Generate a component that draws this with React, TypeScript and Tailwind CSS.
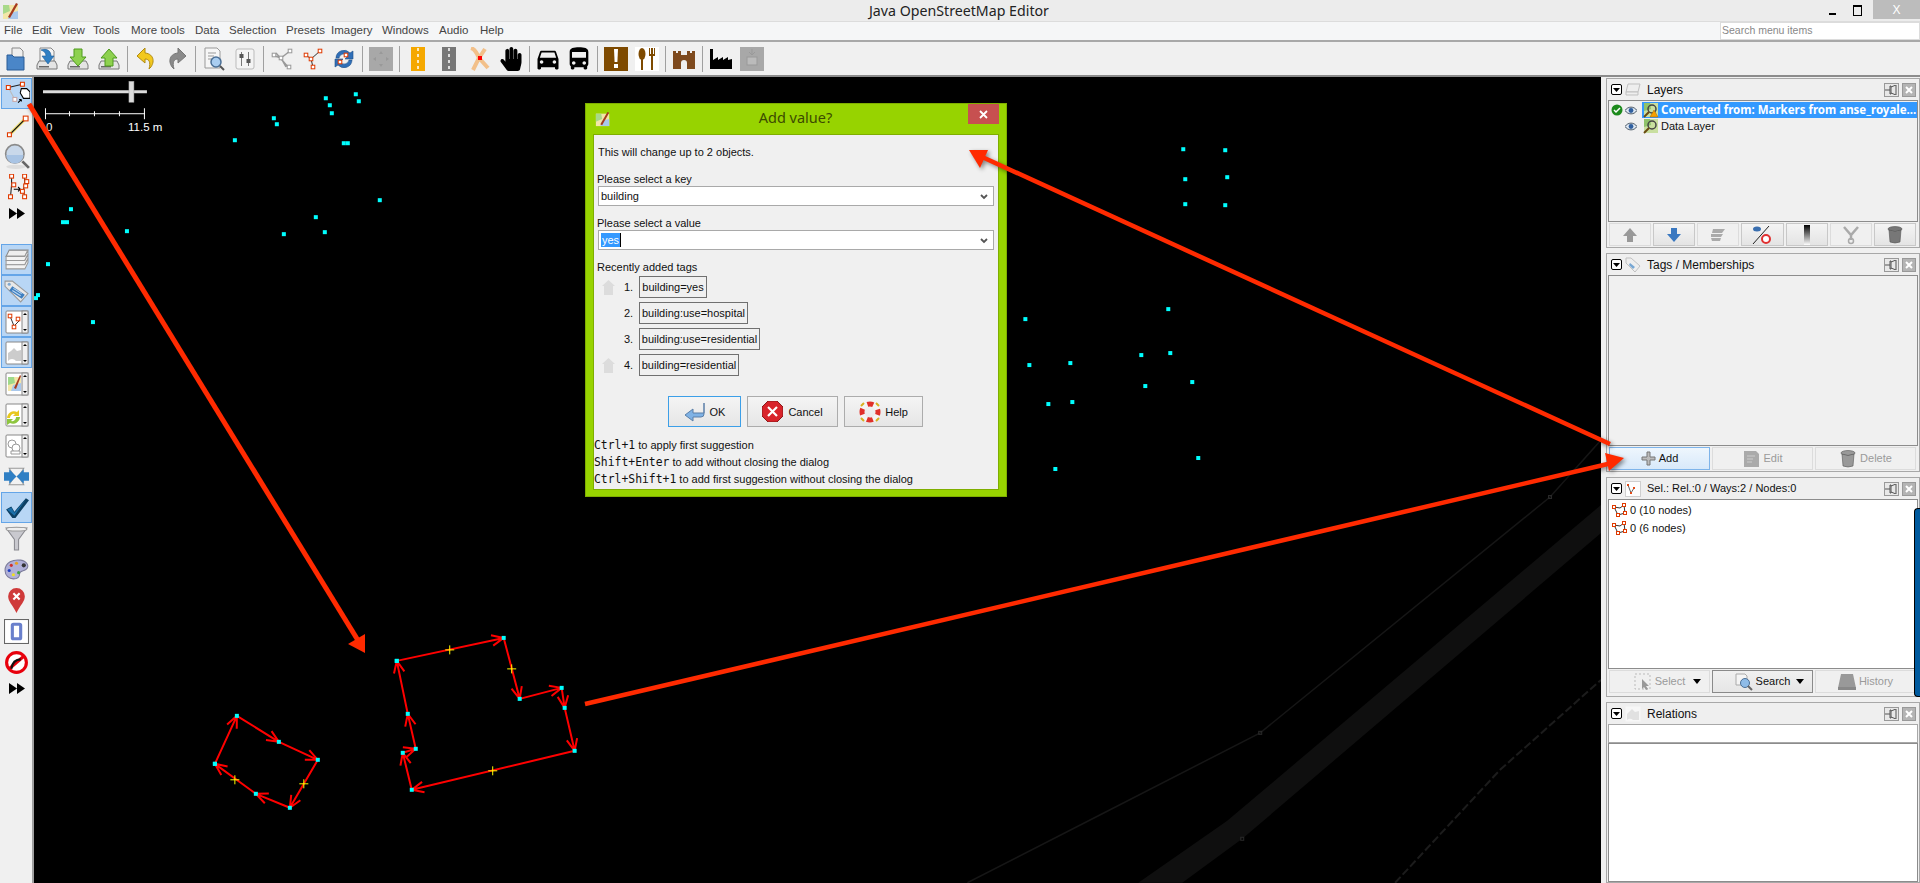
import type { ReactNode } from 'react';
import { FaHandPaper } from 'react-icons/fa';
import { MdDirectionsBus, MdDirectionsCar } from 'react-icons/md';

type Pt = [number, number];

const Ico = ({ children, s = 24 }: { children: ReactNode; s?: number }) => (
	<svg width={s} height={s} viewBox="0 0 24 24" className="shrink-0">
		{children}
	</svg>
);

const Nd = ({ x, y, c = '#e03a00', r = 1.8 }: { x: number; y: number; c?: string; r?: number }) => (
	<rect x={x - r} y={y - r} width={r * 2} height={r * 2} fill="#fff" stroke={c} strokeWidth="1" />
);

const Logo = ({ s = 18 }: { s?: number }) => (
	<svg width={s} height={s} viewBox="0 0 18 18" className="shrink-0">
		<rect x="1" y="3" width="15" height="14" fill="#f3e6a8" />
		<path d="M1 3h6l1 6-7 3z" fill="#a8d98a" />
		<path d="M8 11l8-2v8H6z" fill="#a9c8ec" />
		<path d="M6 15L14 1l2 1-8 14z" fill="#a63a1e" />
	</svg>
);

const drive = (
	<>
		<path d="M4 14h16l2 4v4H2v-4z" fill="#e4e4e4" stroke="#777" />
		<rect x="4" y="19" width="10" height="1.5" fill="#666" />
	</>
);

const topIcons: ReactNode[] = [
	<Ico key="open">
		<path d="M8 1h8l3 3v10H8z" fill="#eee" stroke="#888" />
		<path d="M3 8h5l2 2h10v13H3z" fill="#4a86c8" stroke="#2b5c96" />
	</Ico>,
	<Ico key="loc">
		<path d="M5 1h11l3 3v11H5z" fill="#f4f4f4" stroke="#888" />
		{drive}
		<path d="M6 3c6-2 10 1 10 6h3l-6 8-6-8h4c0-3-2-5-5-6z" fill="#2f7fc4" stroke="#1d5a96" strokeWidth=".6" />
	</Ico>,
	<Ico key="save">
		{drive}
		<path d="M8 2h8v8h4l-8 9-8-9h4z" fill="#8ed14f" stroke="#4f9a1e" />
	</Ico>,
	<Ico key="up">
		{drive}
		<path d="M8 19v-8H4l8-9 8 9h-4v8z" fill="#8ed14f" stroke="#4f9a1e" />
	</Ico>,
	null,
	<Ico key="undo">
		<path d="M11 1L3 9l8 7v-4c4 0 6 3 4 10 6-5 6-15-4-16z" fill="#f2c81e" stroke="#b08a10" />
	</Ico>,
	<Ico key="redo">
		<path d="M13 1l8 8-8 7v-4c-4 0-6 3-4 10-6-5-6-15 4-16z" fill="#8a8a8a" stroke="#777" />
	</Ico>,
	null,
	<Ico key="prev">
		<path d="M3 1h12l3 3v17H3z" fill="#f6f6f6" stroke="#999" />
		<path d="M6 6h8M6 9h6M6 12h4" stroke="#999" />
		<circle cx="14" cy="15" r="5" fill="#a9cdf0" stroke="#4a6f96" strokeWidth="1.5" />
		<path d="M18 19l4 4" stroke="#555" strokeWidth="2" />
	</Ico>,
	<Ico key="pref">
		<rect x="3" y="2" width="18" height="20" rx="2" fill="#f4f4f4" stroke="#bbb" />
		<path d="M8.5 5v14M15.5 5v14" stroke="#777" />
		<rect x="6.5" y="7" width="4" height="4" fill="#555" />
		<rect x="13.5" y="12" width="4" height="4" fill="#555" />
	</Ico>,
	null,
	<Ico key="split">
		<path d="M2 8l9 3 5 9M11 11l9-7M6 6l12 14" stroke="#999" fill="none" strokeWidth="1.5" />
		<Nd x={4} y={8} c="#999" />
		<Nd x={11} y={11} c="#999" />
		<Nd x={19} y={20} c="#999" />
		<Nd x={20} y={4} c="#999" />
	</Ico>,
	<Ico key="comb">
		<path d="M5 8l5 4 9-8M10 12l2 8" stroke="#333" fill="none" />
		<Nd x={5} y={8} />
		<Nd x={10} y={12} />
		<Nd x={19} y={4} />
		<Nd x={12} y={20} />
	</Ico>,
	<Ico key="refresh">
		<path d="M4 11a8 8 0 0 1 14-5l3-2v8h-8l3-3a5 5 0 0 0-9 2z" fill="#2f6fb8" stroke="#1d4d86" strokeWidth=".6" />
		<path d="M20 13a8 8 0 0 1-14 5l-3 2v-8h8l-3 3a5 5 0 0 0 9-2z" fill="#2f6fb8" stroke="#1d4d86" strokeWidth=".6" />
		<Nd x={14} y={8} />
		<Nd x={8} y={15} />
	</Ico>,
	null,
	<Ico key="tile">
		<rect width="24" height="24" fill="#a8a8a8" />
		<path d="M12 4l2 3h-4zM12 20l2-3h-4zM4 12l3-2v4zM20 12l-3-2v4z" fill="#999" />
	</Ico>,
	null,
	<Ico key="road1">
		<rect x="5" width="14" height="24" fill="#f5a800" />
		<path d="M12 1v22" stroke="#fff" strokeWidth="1.5" strokeDasharray="3 3" />
	</Ico>,
	<Ico key="road2">
		<rect x="5" width="14" height="24" fill="#777" />
		<path d="M12 1v22" stroke="#fff" strokeWidth="1.5" strokeDasharray="3 3" />
	</Ico>,
	<Ico key="junction">
		<path d="M3 1c4 1 6 5 8 10L5 23M11 11l6-9M11 11l9 10" stroke="#f2c08a" fill="none" strokeWidth="4" />
		<rect x="10" y="9" width="4" height="4" fill="#f00" />
	</Ico>,
	<FaHandPaper key="hand" size={24} color="#000" />,
	null,
	<MdDirectionsCar key="car" size={28} color="#000" />,
	<MdDirectionsBus key="bus" size={28} color="#000" />,
	null,
	<Ico key="poi">
		<rect width="24" height="24" fill="#7e4a00" />
		<path d="M10 2h4l-.6 13h-2.8z" fill="#fff" />
		<rect x="10" y="17" width="4" height="4" fill="#fff" />
	</Ico>,
	<Ico key="food">
		<rect width="24" height="24" fill="#fff" />
		<ellipse cx="7" cy="7" rx="3.5" ry="6" fill="#7e4a00" />
		<rect x="6" y="10" width="2" height="13" fill="#7e4a00" />
		<path d="M14 1v8h2v14h2V9h2V1h-1v6h-1V1h-2v6h-1V1z" fill="#7e4a00" />
	</Ico>,
	null,
	<Ico key="castle">
		<path d="M1 4h3v2h2V4h3v4h6V4h3v2h2V4h3v18h-8v-6a3 3 0 0 0-6 0v6H1z" fill="#7e4a1e" />
	</Ico>,
	null,
	<Ico key="factory">
		<path d="M1 22V2h3v11l5-3v3l5-3v3l5-3v3l4-1v10z" fill="#000" />
	</Ico>,
	<Ico key="tile2">
		<rect width="24" height="24" fill="#a8a8a8" />
		<rect x="7" y="10" width="10" height="8" fill="#bbb" stroke="#999" />
		<path d="M12 2v6M9 5l3 3 3-3" stroke="#999" fill="none" />
	</Ico>,
];

const mini = (body: ReactNode) => (
	<Ico s={24}>
		<rect x="1" y="1" width="22" height="22" rx="1" fill="#fff" stroke="#888" />
		<rect x="17" y="1" width="6" height="22" fill="#f0f0f0" stroke="#888" />
		<path d="M20 3l2 2h-4zM20 21l2-2h-4z" fill="#000" />
		{body}
	</Ico>
);

const fastFwd = (
	<svg width="16" height="11" viewBox="0 0 16 11">
		<path d="M0 0l8 5.5-8 5.5zM8 0l8 5.5-8 5.5z" fill="#000" />
	</svg>
);

const leftTop: { icon: ReactNode; on?: boolean }[] = [
	{
		on: true,
		icon: (
			<Ico s={26}>
				<path d="M4 6l13-3" stroke="#222" />
				<path d="M4 6l6 11" stroke="#bbb" />
				<Nd x={4} y={6} />
				<Nd x={17} y={3} />
				<Nd x={10} y={17} c="#c8a8a8" />
				<path d="M16 7l5 0 3 3v6h-6l-3-5z" fill="#fff" stroke="#000" />
				<path d="M13 20l3-3m0 0h-2m2 0v2" stroke="#000" />
			</Ico>
		),
	},
	{
		icon: (
			<Ico s={26}>
				<path d="M5 21L20 6" stroke="#f2e27a" strokeWidth="3" />
				<path d="M5 21L20 6" stroke="#111" />
				<Nd x={5} y={21} />
				<Nd x={20} y={6} r={2.2} />
			</Ico>
		),
	},
	{
		icon: (
			<Ico s={26}>
				<ellipse cx="11" cy="22" rx="9" ry="2" fill="#ddd" />
				<circle cx="10" cy="10" r="8.5" fill="#c9d8ea" stroke="#8a8a8a" strokeWidth="1.5" />
				<path d="M2 11h16a8 8 0 0 1-16 0z" fill="#a9c4e4" />
				<path d="M17 17l6 6" stroke="#666" strokeWidth="2.5" />
			</Ico>
		),
	},
	{
		icon: (
			<Ico s={26}>
				<path d="M7 2v8l-1 11M19 2v7l-1 6 1 6" stroke="#222" fill="none" />
				<path d="M9 14h6m-2-2l2 2-2 2" stroke="#000" fill="none" />
				<Nd x={7} y={2} />
				<Nd x={9} y={10} />
				<Nd x={6} y={21} />
				<Nd x={19} y={2} />
				<Nd x={21} y={7} />
				<Nd x={20} y={11} />
				<Nd x={17} y={16} />
				<Nd x={19} y={21} />
			</Ico>
		),
	},
];

const leftBottom: { icon: ReactNode; on?: boolean }[] = [
	{
		on: true,
		icon: (
			<Ico s={25}>
				<path d="M5 3h18l-3 6H2z" fill="#eee" stroke="#888" />
				<path d="M2 9h18l3-6v4l-3 6H2z" fill="#f3f3f3" stroke="#999" />
				<path d="M2 13h18l3-6v4l-3 6H2z" fill="#f3f3f3" stroke="#999" />
				<path d="M2 17h18l3-6v4l-3 6H2z" fill="#f3f3f3" stroke="#999" />
			</Ico>
		),
	},
	{
		on: true,
		icon: (
			<Ico s={25}>
				<path d="M1 3h7l15 12-7 8L1 8z" fill="#e8e8e8" stroke="#999" />
				<circle cx="5" cy="6" r="1.5" fill="#7fa8d0" />
				<path d="M8 8l12 8-3 4-12-8z" fill="#3f7fc0" />
				<path d="M9 10l8 5M8 12l8 5" stroke="#bcd8f2" />
			</Ico>
		),
	},
	{
		on: true,
		icon: mini(
			<>
				<path d="M5 6l4 10 5-5" stroke="#333" fill="none" />
				<Nd x={5} y={6} />
				<Nd x={9} y={17} />
				<Nd x={13} y={9} />
			</>
		),
	},
	{
		on: true,
		icon: mini(<path d="M3 20a5 5 0 0 1 8 0h5V9l-4 1-3-3-3 3-3 2z" fill="#ccc" />),
	},
	{
		icon: mini(
			<>
				<rect x="3" y="5" width="13" height="14" fill="#f3e6a8" />
				<path d="M3 5h6l1 6-7 2z" fill="#9fd98a" />
				<path d="M8 13l8-2v8H6z" fill="#a9c8ec" />
				<path d="M9 16l6-13 1 1-5 13z" fill="#a63a1e" />
			</>
		),
	},
	{
		icon: mini(
			<>
				<path d="M2 15a7 7 0 0 1 10-6l2-2v6H8l2-2a4 4 0 0 0-5 4z" fill="#e8c81e" />
				<path d="M15 14a7 7 0 0 1-10 6l-3 2v-6h6l-2 2a4 4 0 0 0 5-4z" fill="#8ec63f" />
			</>
		),
	},
	{
		icon: mini(
			<>
				<circle cx="7" cy="10" r="4" fill="#fff" stroke="#999" />
				<circle cx="11" cy="14" r="4" fill="#fff" stroke="#999" />
				<path d="M6 17h9v3H6z" fill="#fff" stroke="#999" />
			</>
		),
	},
	{
		icon: (
			<Ico s={25}>
				<path d="M5 4h14l-5 8 5 8H5l5-8z" fill="#f2f2f2" stroke="#999" />
				<path d="M0 8h5V5l7 7-7 7v-3H0z" fill="#2f7fc4" />
				<path d="M24 8h-5V5l-7 7 7 7v-3h5z" fill="#2f7fc4" />
			</Ico>
		),
	},
	{
		on: true,
		icon: (
			<Ico s={25}>
				<path d="M2 14l5-3 3 5L21 3l3 2-13 17H8z" fill="#0d3f63" />
				<path d="M3 14l4-2 3 5L21 4l-11 16z" fill="#1b6ea8" />
			</Ico>
		),
	},
	{
		icon: (
			<Ico s={25}>
				<path d="M2 2h20l-8 11v10h-4V13z" fill="#c9c9cf" stroke="#8a8a90" />
				<ellipse cx="12" cy="3" rx="10" ry="1.8" fill="#eee" stroke="#999" />
			</Ico>
		),
	},
	{
		icon: (
			<Ico s={25}>
				<path d="M1 13C1 5 9 2 16 3c6 1 9 6 5 9-3 2-6 1-6 4s-2 5-6 5-8-3-8-8z" fill="#b0b0d8" stroke="#7a7a9a" />
				<circle cx="7" cy="8" r="1.5" fill="#d03030" />
				<circle cx="12" cy="6" r="1.5" fill="#e8a020" />
				<circle cx="5" cy="13" r="1.5" fill="#2040c0" />
				<circle cx="9" cy="17" r="1.5" fill="#f0e020" />
				<circle cx="19" cy="8" r="2" fill="#333" />
				<circle cx="14" cy="15" r="1.5" fill="#40a040" />
			</Ico>
		),
	},
	{
		icon: (
			<Ico s={25}>
				<path d="M12 24C8 16 4 13 4 8a8 8 0 0 1 16 0c0 5-4 8-8 16z" fill="#cf3a3a" />
				<path d="M9 5l6 6M15 5l-6 6" stroke="#fff" strokeWidth="2" />
			</Ico>
		),
	},
	{
		icon: (
			<Ico s={25}>
				<rect x=".5" y=".5" width="23" height="23" fill="#fff" stroke="#666" />
				<path d="M9 5h6q1 0 1 1v12q0 1-1 1H9q-1 0-1-1V6q0-1 1-1z" fill="none" stroke="#6a80cc" strokeWidth="3" />
			</Ico>
		),
	},
	{
		icon: (
			<Ico s={25}>
				<circle cx="12" cy="12" r="9.5" fill="#fff" stroke="#e8000c" strokeWidth="3" />
				<path d="M5 18L19 6" stroke="#e8000c" strokeWidth="3" />
				<path d="M7 18c1-6 4-9 9-9" stroke="#111" strokeWidth="2" fill="none" />
			</Ico>
		),
	},
];

const Collapse = () => (
	<span className="ml-[3px] flex h-[11px] w-[11px] shrink-0 items-center justify-center rounded-[2px] border border-black bg-white">
		<svg width="7" height="4" viewBox="0 0 7 4">
			<path d="M0 0h7L3.5 4z" fill="#000" />
		</svg>
	</span>
);

const DockBtns = () => (
	<span className="ml-auto mr-[2px] flex gap-[3px]">
		<span className="flex h-[14px] w-[15px] items-center justify-center border border-[#999] bg-[#e8e8e8]">
			<svg width="13" height="10" viewBox="0 0 13 10">
				<path d="M0 5h5M5 1h1v8H5zM11 0v10M6 2l5-2M6 8l5 2" stroke="#555" fill="none" />
			</svg>
		</span>
		<span className="flex h-[14px] w-[14px] items-center justify-center border border-[#999] bg-[#b4b4b4]">
			<svg width="8" height="8" viewBox="0 0 8 8">
				<path d="M1 1l6 6M7 1L1 7" stroke="#fff" strokeWidth="2" />
			</svg>
		</span>
	</span>
);

const PanelHead = ({ icon, title, small }: { icon: ReactNode; title: string; small?: boolean }) => (
	<div className="flex h-[21px] shrink-0 items-center bg-[#efefef]">
		<Collapse />
		<span className="ml-[3px] flex w-[16px] justify-center opacity-90">{icon}</span>
		<span className={`ml-[6px] whitespace-nowrap text-[#111] ${small ? 'text-[11px]' : 'text-[12px]'}`}>{title}</span>
		<DockBtns />
	</div>
);

const PanelBtn = ({
	icon,
	label,
	state = 'off',
	caret,
}: {
	icon: ReactNode;
	label?: string;
	state?: 'off' | 'on' | 'hot' | 'pressed';
	caret?: boolean;
}) => {
	const tone =
		state === 'hot'
			? 'border-[#7eb4ea] bg-gradient-to-b from-[#eef6fd] to-[#d8e9fa] text-[#111]'
			: state === 'on'
				? 'border-[#c8c8c8] bg-gradient-to-b from-[#f4f4f4] to-[#e4e4e4] text-[#111]'
				: state === 'pressed'
					? 'border-[#8a8a8a] bg-gradient-to-b from-[#f0f0f0] to-[#e6e6e6] text-[#111]'
					: 'border-[#dcdcdc] bg-[#f0f0f0] text-[#9a9a9a]';
	return (
		<div className={`relative flex h-[23px] flex-1 items-center justify-center gap-[3px] border text-[11px] ${tone}`}>
			{icon}
			{label && <span>{label}</span>}
			{caret && (
				<svg width="8" height="5" viewBox="0 0 8 5" className="absolute right-[8px] top-[8px]">
					<path d="M0 0h8L4 5z" fill="#000" />
				</svg>
			)}
		</div>
	);
};

const WayIcon = () => (
	<svg width="15" height="14" viewBox="0 0 15 14" className="shrink-0">
		<path d="M2 4l6 1 4-3 1 8-7 2z" fill="none" stroke="#333" />
		<rect x="0.5" y="2.5" width="3" height="3" fill="#fff" stroke="#e03a00" />
		<rect x="10.5" y="0.5" width="3" height="3" fill="#fff" stroke="#e03a00" />
		<rect x="11.5" y="8.5" width="3" height="3" fill="#fff" stroke="#e03a00" />
		<rect x="4.5" y="10.5" width="3" height="3" fill="#fff" stroke="#e03a00" />
	</svg>
);

const HomeIco = () => (
	<svg width="13" height="15" viewBox="0 0 13 15" className="shrink-0">
		<path d="M6.5 0L13 6h-2v9H2V6H0z" fill="#dcdcdc" />
	</svg>
);

const Combo = ({ children }: { children: ReactNode }) => (
	<div className="ml-[4px] flex h-[20px] w-[396px] items-center border border-[#a9a9a9] bg-white pl-[2px] pr-[5px] text-[11px] text-[#111]">
		{children}
		<svg width="8" height="6" viewBox="0 0 8 6" className="ml-auto mt-[2px]">
			<path d="M1 1l3 3 3-3" stroke="#555" strokeWidth="1.8" fill="none" />
		</svg>
	</div>
);

const recent = [
	{ n: '1.', t: 'building=yes', w: 'w-[68px]', home: true },
	{ n: '2.', t: 'building:use=hospital', w: 'w-[109px]', home: false },
	{ n: '3.', t: 'building:use=residential', w: 'w-[121px]', home: false },
	{ n: '4.', t: 'building=residential', w: 'w-[100px]', home: true },
];

const hints = [
	{ k: 'Ctrl+1', t: ' to apply first suggestion' },
	{ k: 'Shift+Enter', t: ' to add without closing the dialog' },
	{ k: 'Ctrl+Shift+1', t: ' to add first suggestion without closing the dialog' },
];

const Dialog = () => (
	<div className="absolute left-[585px] top-[103px] flex h-[394px] w-[422px] flex-col border border-[#7fae00] bg-[#97d300] px-[7px] pb-[6px]">
		<div className="flex h-[30px] shrink-0 items-start">
			<span className="ml-[2px] mt-[7px]">
				<Logo s={16} />
			</span>
			<span className="mt-[3px] flex-1 pl-[12px] text-center font-['Noto_Sans',sans-serif] text-[14.5px] text-[#3c4a00]">Add value?</span>
			<span className="flex h-[20px] w-[31px] items-center justify-center bg-[#c75050]">
				<svg width="9" height="9" viewBox="0 0 9 9">
					<path d="M1 1l7 7M8 1L1 8" stroke="#fff" strokeWidth="1.8" />
				</svg>
			</span>
		</div>
		<div className="flex flex-1 flex-col border border-[#7fae00] bg-[#f0f0f0] text-[11px] leading-[14px] text-[#111]">
			<p className="ml-[4px] mt-[9px] h-[16px] leading-[16px]">This will change up to 2 objects.</p>
			<p className="ml-[3px] mt-[12px] h-[14px]">Please select a key</p>
			<Combo>building</Combo>
			<p className="ml-[3px] mt-[10px] h-[14px]">Please select a value</p>
			<Combo>
				<span className="border-r border-black bg-[#3399ff] px-[1px] text-white">yes</span>
			</Combo>
			<p className="ml-[3px] mt-[10px] h-[14px]">Recently added tags</p>
			<div className="ml-[8px] mt-[2px] flex flex-col gap-[4px]">
				{recent.map((r) => (
					<div key={r.n} className="flex h-[22px] items-center">
						<span className="w-[13px]">{r.home && <HomeIco />}</span>
						<span className="ml-[9px] w-[15px]">{r.n}</span>
						<span className={`flex h-[22px] items-center justify-center whitespace-nowrap border border-[#707070] ${r.w}`}>{r.t}</span>
					</div>
				))}
			</div>
			<div className="mt-[20px] flex h-[31px] justify-center gap-[6px] pr-[1px]">
				<div className="flex w-[73px] items-center justify-center gap-[4px] border border-[#3c9fe8] bg-gradient-to-b from-[#f4f4f4] to-[#e6e6e6]">
					<svg width="22" height="20" viewBox="0 0 22 20">
						<path d="M20 1v10H9V7l-8 6 8 6v-4h8q3 0 3-3z" fill="#7fb2e5" stroke="#5a7fa8" />
					</svg>
					OK
				</div>
				<div className="flex w-[91px] items-center justify-center gap-[5px] border border-[#acacac] bg-gradient-to-b from-[#f4f4f4] to-[#e6e6e6]">
					<svg width="21" height="21" viewBox="0 0 21 21">
						<path d="M6 0h9l6 6v9l-6 6H6l-6-6V6z" fill="#d8232a" stroke="#8a1a1a" />
						<path d="M6 6l9 9M15 6l-9 9" stroke="#fff" strokeWidth="2.2" />
					</svg>
					Cancel
				</div>
				<div className="flex w-[79px] items-center justify-center gap-[4px] border border-[#acacac] bg-gradient-to-b from-[#f4f4f4] to-[#e6e6e6]">
					<svg width="22" height="22" viewBox="0 0 22 22">
						<circle cx="11" cy="11" r="8" fill="none" stroke="#f4f4f4" strokeWidth="5" />
						<circle cx="11" cy="11" r="8" fill="none" stroke="#e0302a" strokeWidth="5" strokeDasharray="6 6.6" strokeDashoffset="3" />
						<path d="M2 5l3-3M17 2l3 3M2 17l3 3M17 20l3-3" stroke="#d8b020" strokeWidth="2" />
					</svg>
					Help
				</div>
			</div>
			<div className="mt-[10px] flex flex-col">
				{hints.map((h) => (
					<p key={h.k} className="h-[17px] whitespace-pre leading-[17px]">
						<span className="font-['DejaVu_Sans_Mono',monospace] text-[11.4px]">{h.k}</span>
						{h.t}
					</p>
				))}
			</div>
		</div>
	</div>
);

const dots: Pt[] = [
	[325, 98], [329, 105], [331, 113], [355, 94], [358, 101], [273, 118], [276, 124], [234, 140], [343, 143], [347, 143],
	[379, 200], [315, 217], [324, 232], [283, 234], [70, 209], [62, 222], [66, 222], [126, 231], [47, 264], [37, 295],
	[35, 298], [92, 322], [1183, 149], [1225, 150], [1185, 179], [1227, 177], [1185, 204], [1225, 205], [1168, 309],
	[1025, 319], [1141, 355], [1170, 353], [1029, 365], [1070, 363], [1145, 386], [1192, 382], [1048, 404], [1072, 402],
	[1198, 458], [1055, 469],
];

const wayA: Pt[] = [[214, 764], [236, 716], [278, 742], [317, 760], [289, 808], [255, 794], [214, 764]];
const wayB: Pt[] = [[396, 661], [503, 638], [519, 699], [561, 688], [564, 708], [574, 751], [411, 790], [402, 753], [415, 749], [407, 714], [396, 661]];
const marks: Pt[] = [[303, 784], [234, 780], [449, 650], [511, 669], [492, 771]];

const barbs = (a: Pt, b: Pt) => {
	const ang = Math.atan2(b[1] - a[1], b[0] - a[0]);
	return [0.42, -0.42].map((d) => {
		const t = ang + Math.PI + d;
		return `M${b[0]} ${b[1]}L${b[0] + 13 * Math.cos(t)} ${b[1] + 13 * Math.sin(t)}`;
	});
};

const wayPath = (pts: Pt[]) => {
	let d = `M${pts[0][0]} ${pts[0][1]}`;
	pts.slice(1).forEach((p, i) => {
		d += `L${p[0]} ${p[1]}${barbs(pts[i], p).join('')}M${p[0]} ${p[1]}`;
	});
	return d;
};

const MapCanvas = () => (
	<div className="relative min-w-0 flex-1 overflow-hidden bg-black">
		<svg className="absolute inset-0 h-full w-full" viewBox="33 77 1568 806">
			<path d="M1138 883L1227 821L1601 505V533L1242 839L1182 883Z" fill="#0f0f0f" />
			<path d="M967 883L1100 815L1260 733L1550 497L1601 440" fill="none" stroke="#161616" strokeWidth="1.5" />
			<path d="M1395 883L1500 770L1601 680" fill="none" stroke="#1c1c1c" strokeWidth="2" strokeDasharray="8 3" />
			<rect x="1258.5" y="731.5" width="3" height="3" fill="none" stroke="#2a2a2a" />
			<rect x="1548.5" y="495.5" width="3" height="3" fill="none" stroke="#2a2a2a" />
			<rect x="1240.5" y="837.5" width="3" height="3" fill="none" stroke="#2a2a2a" />

			<rect x="42" y="90" width="104" height="3" fill="#dcdcdc" />
			<rect x="128" y="81" width="5" height="21" fill="#dcdcdc" stroke="#999" strokeWidth=".5" />
			<path d="M44.5 108v11M143.5 108v11M44 113.5h100M68.5 111v5M93.5 111v5M118.5 111v5" stroke="#fff" />

			<path d={wayPath(wayA)} fill="none" stroke="#f00" strokeWidth="2" />
			<path d={wayPath(wayB)} fill="none" stroke="#f00" strokeWidth="2" />
			{marks.map(([x, y]) => (
				<path key={`${x}-${y}`} d={`M${x - 4.5} ${y}h9M${x} ${y - 4.5}v9`} stroke="#ff0" />
			))}
			{dots.map(([x, y]) => (
				<rect key={`${x}-${y}`} x={x - 2} y={y - 2} width="4" height="4" fill="#0ff" />
			))}
			{[...wayA, ...wayB].map(([x, y]) => (
				<rect key={`n${x}-${y}`} x={x - 2} y={y - 2} width="4" height="4" fill="#0ff" />
			))}
		</svg>
		<span className="absolute left-[12px] top-[43px] text-[11.5px] leading-[14px] text-white">0</span>
		<span className="absolute left-[94px] top-[43px] text-[11.5px] leading-[14px] text-white">11.5 m</span>
	</div>
);

const Notes = () => (
	<svg className="pointer-events-none absolute inset-0" width="1920" height="883">
		<g className="drop-shadow-[2px_2px_2px_rgba(0,0,0,0.45)]">
			<path d="M29 104L359 642" stroke="#ff2a00" strokeWidth="5" />
			<path d="M365 653L348 644L365 634Z" fill="#ff2a00" />
			<path d="M1610 444L980 156" stroke="#ff2a00" strokeWidth="4.5" />
			<path d="M969 150L980 168L988 150Z" fill="#ff2a00" />
			<path d="M585 704L1612 463" stroke="#ff2a00" strokeWidth="4.5" />
			<path d="M1624 458L1605 453L1609 471Z" fill="#ff2a00" />
		</g>
	</svg>
);

const menu = [
	{ t: 'File', w: 'w-[28px]' },
	{ t: 'Edit', w: 'w-[28px]' },
	{ t: 'View', w: 'w-[33px]' },
	{ t: 'Tools', w: 'w-[38px]' },
	{ t: 'More tools', w: 'w-[64px]' },
	{ t: 'Data', w: 'w-[34px]' },
	{ t: 'Selection', w: 'w-[57px]' },
	{ t: 'Presets', w: 'w-[45px]' },
	{ t: 'Imagery', w: 'w-[51px]' },
	{ t: 'Windows', w: 'w-[57px]' },
	{ t: 'Audio', w: 'w-[41px]' },
	{ t: 'Help', w: 'w-[32px]' },
];

const Eye = () => (
	<svg width="12" height="9" viewBox="0 0 12 9" className="ml-[2px] shrink-0">
		<path d="M0 4.5C3 0 9 0 12 4.5 9 9 3 9 0 4.5z" fill="#dfe8f2" stroke="#234" strokeWidth=".8" />
		<circle cx="6" cy="4.5" r="2.4" fill="#2f5f9f" />
	</svg>
);

const LayerIco = ({ warn }: { warn?: boolean }) => (
	<svg width="16" height="16" viewBox="0 0 16 16" className="shrink-0">
		<rect x="1" y="1" width="14" height="14" fill="#c9dfa0" />
		<path d="M1 1h6l1 6-7 2z" fill="#8fc26a" />
		<circle cx="9" cy="7" r="4" fill="none" stroke="#444" strokeWidth="1.5" />
		<path d="M6 10l-5 5" stroke="#6a4a10" strokeWidth="2" />
		{warn && <path d="M11 8l4 7H7z" fill="#f5a000" stroke="#a06000" strokeWidth=".5" />}
	</svg>
);

const Trash = ({ c, s }: { c: string; s: number }) => (
	<svg width={s} height={s} viewBox="0 0 18 18" className="shrink-0">
		<ellipse cx="9" cy="3" rx="7" ry="2.5" fill={c} stroke="#555" strokeWidth=".6" />
		<path d="M3 4l1 12q5 2 10 0l1-12q-6 3-12 0z" fill={c} stroke="#555" strokeWidth=".6" />
	</svg>
);

export default function App() {
	return (
		<div className="relative flex h-[883px] w-[1920px] flex-col overflow-hidden bg-[#f0f0f0] font-['Liberation_Sans',sans-serif]">
			<header className="flex h-[22px] shrink-0 items-center border-b border-[#dcdcdc] bg-[#ececec]">
				<span className="ml-[2px]">
					<Logo />
				</span>
				<span className="ml-[849px] font-['Noto_Sans',sans-serif] text-[14.2px] text-[#222]">Java OpenStreetMap Editor</span>
				<span className="ml-auto mr-[11px] flex items-center gap-[17px]">
					<span className="mt-[6px] h-[2px] w-[7px] bg-black" />
					<span className="h-[11px] w-[9px] border border-t-2 border-black" />
				</span>
				<span className="flex h-[19px] w-[47px] items-center justify-center self-start bg-[#bcbcbc] text-[12px] text-white">X</span>
			</header>

			<nav className="flex h-[20px] shrink-0 items-center border-b-2 border-[#a8a8a8] bg-[#f5f6f7] pl-[4px] text-[11.5px] text-[#444]">
				{menu.map((m) => (
					<span key={m.t} className={`whitespace-nowrap ${m.w}`}>
						{m.t}
					</span>
				))}
				<span className="ml-auto flex h-[18px] w-[200px] items-center border border-[#dcdcdc] bg-white pl-[1px] text-[10.5px] text-[#888]">
					Search menu items
				</span>
			</nav>

			<div className="flex h-[35px] shrink-0 items-center border-b-2 border-[#8c8c8c] bg-[#f0f0f0]">
				{topIcons.map((ic, i) =>
					ic === null ? (
						<span key={i} className="flex h-[26px] w-[6px] justify-center">
							<span className="h-full w-px bg-[#a0a0a0]" />
						</span>
					) : (
						<span key={i} className="flex w-[31px] justify-center">
							{ic}
						</span>
					)
				)}
			</div>

			<main className="flex min-h-0 flex-1">
				<aside className="flex w-[34px] shrink-0 flex-col items-start border-r-2 border-[#a0a0a0] bg-[#f0f0f0] pl-[1px] pt-[1px]">
					{leftTop.map((b, i) => (
						<span key={i} className={`flex h-[31px] w-[31px] items-center justify-center ${b.on ? 'border border-[#64a5e8] bg-[#b8d6f5]' : ''}`}>
							{b.icon}
						</span>
					))}
					<span className="flex h-[22px] w-[31px] items-center justify-center">{fastFwd}</span>
					<span className="mt-[20px]" />
					{leftBottom.map((b, i) => (
						<span key={i} className={`flex h-[31px] w-[31px] items-center justify-center ${b.on ? 'border border-[#64a5e8] bg-[#b8d6f5]' : ''}`}>
							{b.icon}
						</span>
					))}
					<span className="flex h-[20px] w-[31px] items-center justify-center">{fastFwd}</span>
				</aside>

				<MapCanvas />

				<aside className="flex w-[319px] shrink-0 flex-col bg-[#f0f0f0] pl-[5px] pt-[1px] text-[#111]">
					<section className="flex h-[170px] shrink-0 flex-col border border-[#a8a8a8] px-px">
						<PanelHead
							title="Layers"
							icon={
								<svg width="16" height="14" viewBox="0 0 16 14">
									<path d="M3 1h12l-2 8H1z" fill="#eee" stroke="#bbb" />
									<path d="M1 9h12v3H1z" fill="#eee" stroke="#bbb" />
								</svg>
							}
						/>
						<div className="h-[122px] shrink-0 border border-[#8c8c8c] bg-[#f0f0f0] pt-px text-[11px]">
							<div className="flex h-[16px] items-center">
								<svg width="12" height="12" viewBox="0 0 12 12" className="ml-[2px] shrink-0">
									<circle cx="6" cy="6" r="5.5" fill="#1c8a1c" />
									<path d="M3 6l2 2 4-4" stroke="#fff" strokeWidth="1.5" fill="none" />
								</svg>
								<Eye />
								<span className="ml-[5px] flex h-[16px] flex-1 items-center gap-[2px] overflow-hidden whitespace-nowrap bg-[#3399ff] pl-px font-['Noto_Sans',sans-serif] font-bold text-white">
									<LayerIco warn />
									<span className="text-[11.5px]">Converted from: Markers from anse_royale...</span>
								</span>
							</div>
							<div className="flex h-[16px] items-center">
								<span className="w-[14px]" />
								<Eye />
								<span className="ml-[5px] flex items-center gap-[2px] pl-px">
									<LayerIco />
									Data Layer
								</span>
							</div>
						</div>
						<div className="flex h-[25px] shrink-0 gap-[2px] pl-px pr-[2px] pt-px">
							<PanelBtn
								icon={
									<svg width="16" height="16" viewBox="0 0 16 16">
										<path d="M8 1l7 8h-4v6H5V9H1z" fill="#999" />
									</svg>
								}
							/>
							<PanelBtn
								state="on"
								icon={
									<svg width="16" height="16" viewBox="0 0 16 16">
										<path d="M5 1h6v6h4l-7 8-7-8h4z" fill="#3a78c0" />
									</svg>
								}
							/>
							<PanelBtn
								icon={
									<svg width="18" height="16" viewBox="0 0 18 16">
										<path d="M4 2h12l-3 4H3zM2 7h12l-2 3H2zM2 11h10l-1 3H3z" fill="#aaa" />
									</svg>
								}
							/>
							<PanelBtn
								state="on"
								icon={
									<svg width="20" height="20" viewBox="0 0 20 20">
										<path d="M1 19L17 1" stroke="#222" />
										<ellipse cx="5" cy="4" rx="4" ry="2.5" fill="#3a6fb0" />
										<circle cx="14" cy="14" r="4" fill="#fff" stroke="#e03030" strokeWidth="2" />
									</svg>
								}
							/>
							<PanelBtn
								state="on"
								icon={
									<svg width="6" height="20" viewBox="0 0 6 20">
										<defs>
											<linearGradient id="op" x1="0" y1="0" x2="0" y2="1">
												<stop offset="0" stopColor="#000" />
												<stop offset="1" stopColor="#fff" />
											</linearGradient>
										</defs>
										<rect width="6" height="20" fill="url(#op)" />
									</svg>
								}
							/>
							<PanelBtn
								icon={
									<svg width="20" height="20" viewBox="0 0 20 20">
										<path d="M3 2l7 8 7-8M10 10v5" stroke="#aaa" strokeWidth="2.5" fill="none" />
										<circle cx="10" cy="16" r="2.5" fill="none" stroke="#aaa" strokeWidth="1.5" />
									</svg>
								}
							/>
							<PanelBtn state="on" icon={<Trash c="#777" s={18} />} />
						</div>
					</section>

					<section className="mt-[5px] flex h-[219px] shrink-0 flex-col border border-[#a8a8a8] px-px">
						<PanelHead
							title="Tags / Memberships"
							icon={
								<svg width="16" height="16" viewBox="0 0 16 16">
									<path d="M1 1h5l9 8-5 6-9-9z" fill="#eee" stroke="#bbb" />
									<path d="M5 6l5 4-2 2-4-4z" fill="#6a9fd0" />
								</svg>
							}
						/>
						<div className="h-[171px] shrink-0 border border-[#8c8c8c] bg-[#f0f0f0]" />
						<div className="flex h-[25px] shrink-0 gap-[2px] pl-px pr-[2px] pt-px">
							<PanelBtn
								state="hot"
								label="Add"
								icon={
									<svg width="15" height="15" viewBox="0 0 15 15">
										<path d="M6 1h3v5h5v3H9v5H6V9H1V6h5z" fill="#bbb" stroke="#777" />
									</svg>
								}
							/>
							<PanelBtn
								label="Edit"
								icon={
									<svg width="18" height="18" viewBox="0 0 18 18">
										<path d="M1 1h12l3 3v13H1z" fill="#aaa" />
										<path d="M4 6h8M4 9h6M4 12h5" stroke="#ccc" />
									</svg>
								}
							/>
							<PanelBtn label="Delete" icon={<Trash c="#999" s={18} />} />
						</div>
					</section>

					<section className="mt-[5px] flex h-[220px] shrink-0 flex-col border border-[#a8a8a8] px-px">
						<PanelHead
							small
							title="Sel.: Rel.:0 / Ways:2 / Nodes:0"
							icon={
								<svg width="16" height="16" viewBox="0 0 16 16">
									<rect x=".5" y=".5" width="15" height="15" fill="#fff" stroke="#ccc" />
									<path d="M3 4l3 8 3-5" stroke="#555" fill="none" />
									<rect x="2" y="3" width="2" height="2" fill="#e03a00" />
									<rect x="5" y="11" width="2" height="2" fill="#e03a00" />
									<rect x="8" y="6" width="2" height="2" fill="#e03a00" />
								</svg>
							}
						/>
						<div className="h-[170px] shrink-0 border border-[#8c8c8c] bg-white pl-[3px] pt-[1px] text-[11px]">
							<div className="flex h-[18px] items-center gap-[3px]">
								<WayIcon />0 (10 nodes)
							</div>
							<div className="flex h-[18px] items-center gap-[3px]">
								<WayIcon />0 (6 nodes)
							</div>
						</div>
						<div className="flex h-[25px] shrink-0 gap-[2px] pl-px pr-[2px] pt-px">
							<PanelBtn
								caret
								label="Select"
								icon={
									<svg width="18" height="18" viewBox="0 0 18 18">
										<rect x="1" y="1" width="15" height="15" fill="none" stroke="#bbb" strokeDasharray="2 2" />
										<path d="M8 6v10l2-2 2 3 2-1-2-3h3z" fill="#999" />
									</svg>
								}
							/>
							<PanelBtn
								caret
								state="pressed"
								label="Search"
								icon={
									<svg width="18" height="18" viewBox="0 0 18 18">
										<path d="M1 1h9l2 2v9H1z" fill="#f4f4f4" stroke="#aaa" />
										<circle cx="10" cy="10" r="4.5" fill="#8fbce8" stroke="#4a6f96" />
										<path d="M13 13l4 4" stroke="#666" strokeWidth="2" />
									</svg>
								}
							/>
							<PanelBtn
								label="History"
								icon={
									<svg width="18" height="16" viewBox="0 0 18 16">
										<path d="M3 0h12l3 14H0z" fill="#999" />
										<rect y="13" width="18" height="3" fill="#888" />
									</svg>
								}
							/>
						</div>
					</section>

					<section className="mt-[5px] flex min-h-0 flex-1 flex-col border border-[#a8a8a8] px-px">
						<PanelHead
							title="Relations"
							icon={
								<svg width="16" height="16" viewBox="0 0 16 16">
									<rect x=".5" y=".5" width="15" height="15" fill="#f8f8f8" />
									<path d="M2 14a4 4 0 0 1 6 0h6V5l-4 1-3-3-3 3-2 2z" fill="#e0e0e0" />
								</svg>
							}
						/>
						<div className="h-[19px] shrink-0 border border-[#a8a8a8] bg-white" />
						<div className="flex-1 border border-[#8c8c8c] bg-white" />
					</section>
				</aside>
			</main>

			<Dialog />
			<Notes />
			<span className="absolute left-[1914px] top-[508px] h-[189px] w-[6px] rounded-l-[4px] border border-r-0 border-black bg-[#005a9e]" />
		</div>
	);
}
